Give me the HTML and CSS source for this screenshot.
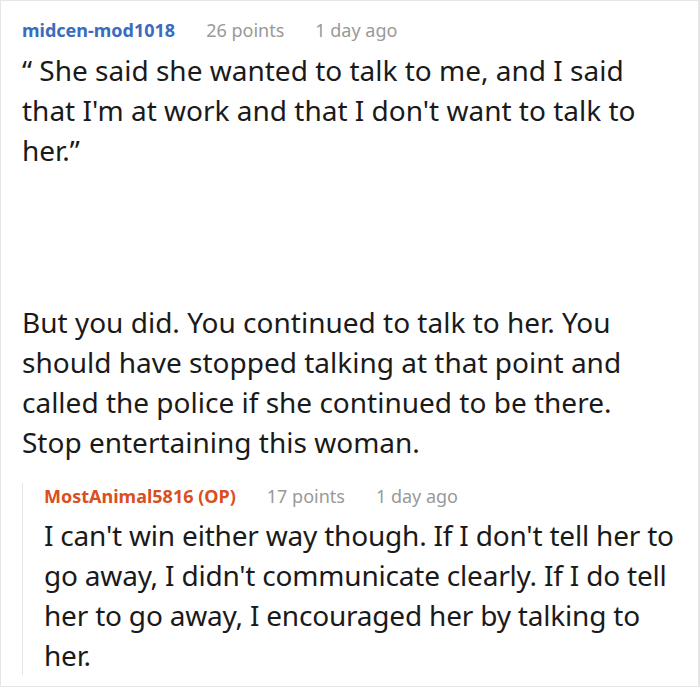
FILE: index.html
```html
<!DOCTYPE html>
<html>
<head>
<meta charset="utf-8">
<link rel="stylesheet" href="styles.css">
</head>
<body>
<div class="frame">
  <div class="comment">
    <div class="meta">
      <span class="user">midcen-mod1018</span>
      <span class="info">26 points</span>
      <span class="info">1 day ago</span>
    </div>
    <p class="body">“ She said she wanted to talk to me, and I said that I'm at work and that I don't want to talk to her.”</p>
    <p class="body gap">But you did. You continued to talk to her. You should have stopped talking at that point and called the police if she continued to be there. Stop entertaining this woman.</p>
    <div class="reply">
      <div class="meta">
        <span class="user op">MostAnimal5816 (OP)</span>
        <span class="info">17 points</span>
        <span class="info">1 day ago</span>
      </div>
      <p class="body">I can't win either way though. If I don't tell her to go away, I didn't communicate clearly. If I do tell her to go away, I encouraged her by talking to her.</p>
    </div>
  </div>
</div>
</body>
</html>
```

FILE: styles.css
```css
html, body {
  margin: 0;
  padding: 0;
  background: #fff;
}
.frame {
  width: 700px;
  height: 687px;
  box-sizing: border-box;
  border: 1px solid #e6e6e6;
  border-right-width: 2px;
  overflow: hidden;
  font-family: "Noto Sans", "Open Sans", sans-serif;
  color: #1a1a1a;
}
.comment {
  padding: 16px 0 0 21px;
}
.meta {
  display: flex;
  gap: 31px;
  font-size: 18px;
  line-height: 26px;
}
.user {
  font-weight: 700;
  color: #3a6bbd;
}
.user.op {
  color: #d9501e;
}
.info {
  color: #999;
}
.body {
  margin: 7px 0 0;
  font-size: 28px;
  line-height: 40px;
  padding-right: 25px;
}
.gap {
  margin-top: 132px;
}
.reply {
  margin-top: 32px;
  border-left: 1px solid #e4e4e4;
  padding-left: 21px;
}
.reply .meta {
  margin-top: -11px;
}
.reply .body {
  margin-top: 6px;
  margin-bottom: -5px;
  padding-right: 8px;
  letter-spacing: -0.2px;
}
```
